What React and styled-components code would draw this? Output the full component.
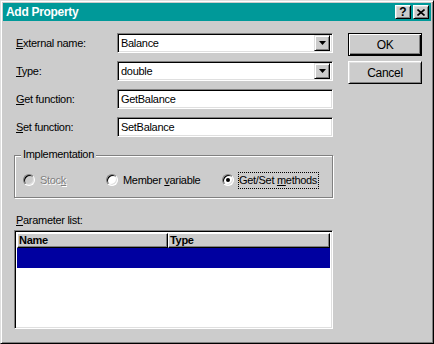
import React from "react"
import styled, { createGlobalStyle } from "styled-components"

const colors = {
  face: "#cccccc",
  light: "#dfdfdf",
  shadow: "#808080",
  dark: "#000000",
  title: "#009999",
  select: "#0000a0",
}

const GlobalStyle = createGlobalStyle`
  html, body {
    margin: 0;
    padding: 0;
    background: ${colors.face};
  }
  body {
    font-family: "Liberation Sans", Arial, sans-serif;
    font-size: 11px;
    letter-spacing: -0.3px;
    color: #000;
  }
`

const Window = styled.div`
  box-sizing: border-box;
  width: 434px;
  height: 344px;
  padding: 2px;
  background: ${colors.face};
  border: 1px solid;
  border-color: ${colors.light} ${colors.dark} ${colors.dark} ${colors.light};
  box-shadow: inset 1px 1px #fff, inset -1px -1px ${colors.shadow};
  display: flex;
  flex-direction: column;
`

const TitleBar = styled.div`
  height: 18px;
  flex: none;
  background: ${colors.title};
  display: flex;
  align-items: center;
  padding: 0 2px 0 3px;
  color: #fff;
  font-weight: bold;
  font-size: 12px;
`

const TitleText = styled.span`
  flex: 1;
`

const CaptionButtons = styled.div`
  display: flex;
  gap: 2px;
`

const raised = `
  background: ${colors.face};
  border: 1px solid;
  border-color: #fff ${colors.dark} ${colors.dark} #fff;
  box-shadow: inset 1px 1px ${colors.light}, inset -1px -1px ${colors.shadow};
`

const sunken = `
  border: 1px solid;
  border-color: ${colors.shadow} #fff #fff ${colors.shadow};
  box-shadow: inset 1px 1px ${colors.dark}, inset -1px -1px ${colors.light};
`

const CaptionButton = styled.div`
  box-sizing: border-box;
  width: 16px;
  height: 14px;
  ${raised}
  display: flex;
  align-items: center;
  justify-content: center;
  color: #000;
  font-size: 12px;
  font-weight: bold;
  line-height: 1;
  letter-spacing: 0;
`

const Body = styled.div`
  flex: 1;
  display: flex;
  gap: 15px;
  padding: 12px 9px 0 11px;
`

const LeftColumn = styled.div`
  width: 319px;
  display: flex;
  flex-direction: column;
`

const RightColumn = styled.div`
  width: 74px;
  display: flex;
  flex-direction: column;
  gap: 5px;
`

const FormGrid = styled.div`
  display: grid;
  grid-template-columns: 103px 216px;
  grid-auto-rows: 20px;
  row-gap: 8px;
  align-items: center;
`

const Label = styled.label`
  padding-left: 2px;
`

const Key = styled.span`
  text-decoration: underline;
  text-underline-offset: 1px;
`

const Field = styled.div`
  box-sizing: border-box;
  height: 20px;
  ${sunken}
  background: #fff;
  display: flex;
  align-items: center;
  padding: 2px 2px 2px 3px;
`

const FieldText = styled.span`
  flex: 1;
`

const DropButton = styled.div`
  box-sizing: border-box;
  width: 16px;
  height: 16px;
  ${raised}
  border-color: ${colors.light} ${colors.dark} ${colors.dark} ${colors.light};
  box-shadow: inset 1px 1px #fff, inset -1px -1px ${colors.shadow};
  display: flex;
  align-items: center;
  justify-content: center;
`

const GroupBox = styled.div`
  position: relative;
  box-sizing: border-box;
  height: 43px;
  margin-top: 18px;
  border: 1px solid ${colors.shadow};
  box-shadow: inset 1px 1px #fff, 1px 1px #fff;
  display: flex;
  align-items: center;
  padding: 7px 0 0 8px;
`

const GroupLabel = styled.span`
  position: absolute;
  top: -8px;
  left: 6px;
  padding: 0 2px;
  background: ${colors.face};
`

const RadioOption = styled.div`
  width: ${({ $width }) => ($width ? `${$width}px` : "auto")};
  display: flex;
  align-items: center;
  gap: 4px;
  color: ${({ $disabled }) => ($disabled ? colors.shadow : "#000")};
  text-shadow: ${({ $disabled }) => ($disabled ? "1px 1px #fff" : "none")};
`

const RadioCircle = styled.span`
  box-sizing: border-box;
  width: 12px;
  height: 12px;
  border-radius: 50%;
  ${sunken}
  background: ${({ $disabled }) => ($disabled ? colors.face : "#fff")};
  display: flex;
  align-items: center;
  justify-content: center;
  &::after {
    content: "";
    display: ${({ $checked }) => ($checked ? "block" : "none")};
    width: 4px;
    height: 4px;
    border-radius: 50%;
    background: #000;
  }
`

const RadioText = styled.span`
  box-sizing: border-box;
  height: 17px;
  line-height: 15px;
  padding: 0 1px 0 0;
  border: 1px dotted ${({ $focused }) => ($focused ? "#000" : "transparent")};
`

const SectionLabel = styled.div`
  margin-top: 16px;
  line-height: 13px;
  padding-left: 2px;
`

const ListBox = styled.div`
  box-sizing: border-box;
  margin-top: 3px;
  height: 99px;
  ${sunken}
  background: #fff;
  padding: 2px;
  display: flex;
  flex-direction: column;
`

const HeaderRow = styled.div`
  display: flex;
  height: 15px;
  flex: none;
`

const HeaderCell = styled.div`
  box-sizing: border-box;
  width: ${({ $width }) => ($width ? `${$width}px` : "auto")};
  flex: ${({ $width }) => ($width ? "none" : "1")};
  ${raised}
  border-color: #fff ${colors.dark} ${colors.dark} #fff;
  box-shadow: inset -1px -1px ${colors.shadow};
  font-weight: bold;
  line-height: 13px;
  padding-left: 1px;
`

const ListRow = styled.div`
  height: 20px;
  flex: none;
  background: ${({ $selected }) => ($selected ? colors.select : "#fff")};
`

const Button = styled.div`
  box-sizing: border-box;
  height: 23px;
  background: ${colors.face};
  border: 1px solid;
  border-color: ${({ $default }) =>
    $default ? "#000" : `#fff ${colors.dark} ${colors.dark} #fff`};
  box-shadow: ${({ $default }) =>
    $default
      ? `inset 1px 1px #fff, inset -1px -1px ${colors.dark}, inset -2px -2px ${colors.shadow}`
      : `inset 1px 1px ${colors.light}, inset -1px -1px ${colors.shadow}`};
  display: flex;
  align-items: center;
  justify-content: center;
  font-size: 12px;
`

function Combo({ value }) {
  return (
    <Field>
      <FieldText>{value}</FieldText>
      <DropButton>
        <svg width="7" height="4" viewBox="0 0 7 4">
          <polygon points="0,0 7,0 3.5,4" fill="#000" />
        </svg>
      </DropButton>
    </Field>
  )
}

export default function App() {
  return (
    <>
      <GlobalStyle />
      <Window>
        <TitleBar>
          <TitleText>Add Property</TitleText>
          <CaptionButtons>
            <CaptionButton>?</CaptionButton>
            <CaptionButton>
              <svg width="8" height="7" viewBox="0 0 8 7">
                <path d="M0.5 0.5 L7.5 6.5 M7.5 0.5 L0.5 6.5" stroke="#000" strokeWidth="1.6" />
              </svg>
            </CaptionButton>
          </CaptionButtons>
        </TitleBar>
        <Body>
          <LeftColumn>
            <FormGrid>
              <Label><Key>E</Key>xternal name:</Label>
              <Combo value="Balance" />
              <Label><Key>T</Key>ype:</Label>
              <Combo value="double" />
              <Label><Key>G</Key>et function:</Label>
              <Field><FieldText>GetBalance</FieldText></Field>
              <Label><Key>S</Key>et function:</Label>
              <Field><FieldText>SetBalance</FieldText></Field>
            </FormGrid>

            <GroupBox>
              <GroupLabel>Implementation</GroupLabel>
              <RadioOption $width={83} $disabled>
                <RadioCircle $disabled />
                <RadioText>Stoc<Key>k</Key></RadioText>
              </RadioOption>
              <RadioOption $width={116}>
                <RadioCircle />
                <RadioText>Member <Key>v</Key>ariable</RadioText>
              </RadioOption>
              <RadioOption>
                <RadioCircle $checked />
                <RadioText $focused>Get/Set <Key>m</Key>ethods</RadioText>
              </RadioOption>
            </GroupBox>

            <SectionLabel><Key>P</Key>arameter list:</SectionLabel>
            <ListBox>
              <HeaderRow>
                <HeaderCell $width={151}>Name</HeaderCell>
                <HeaderCell>Type</HeaderCell>
              </HeaderRow>
              <ListRow $selected />
            </ListBox>
          </LeftColumn>

          <RightColumn>
            <Button $default>OK</Button>
            <Button>Cancel</Button>
          </RightColumn>
        </Body>
      </Window>
    </>
  )
}
